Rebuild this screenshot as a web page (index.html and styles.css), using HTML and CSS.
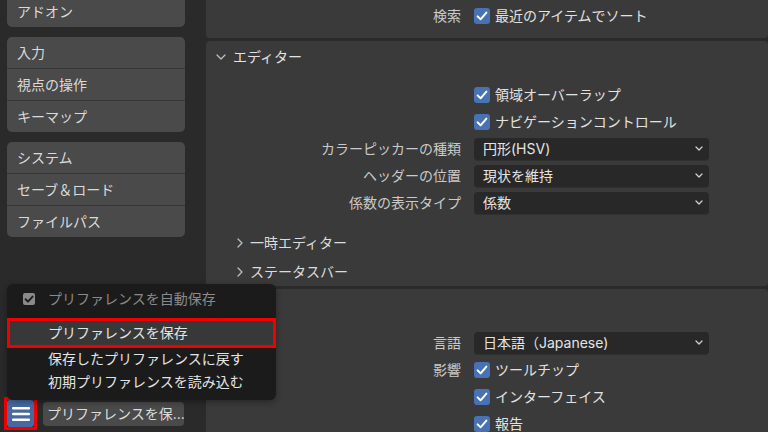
FILE: index.html
```html
<!DOCTYPE html>
<html lang="ja">
<head>
<meta charset="utf-8">
<link rel="stylesheet" href="styles.css">
</head>
<body>
<div class="app">
  <aside class="nav">
    <div class="group first"><div class="item">アドオン</div></div>
    <div class="group">
      <div class="item">入力</div>
      <div class="item">視点の操作</div>
      <div class="item">キーマップ</div>
    </div>
    <div class="group">
      <div class="item">システム</div>
      <div class="item">セーブ＆ロード</div>
      <div class="item">ファイルパス</div>
    </div>
    <div class="footer">
      <div class="burger-frame">
        <div class="burger">
          <svg width="18" height="16" viewBox="0 0 18 16"><rect x="0" y="1" width="18" height="2.6" rx="1" fill="#fff"/><rect x="0" y="6.7" width="18" height="2.6" rx="1" fill="#fff"/><rect x="0" y="12.4" width="18" height="2.6" rx="1" fill="#fff"/></svg>
        </div>
      </div>
      <div class="save-btn">プリファレンスを保...</div>
    </div>
    <div class="popup">
      <div class="prow disabled">
        <span class="gcheck"><svg width="12" height="12" viewBox="0 0 12 12"><path d="M2.6 6.2 L5 8.6 L9.6 3.6" fill="none" stroke="#1e1e1e" stroke-width="2" stroke-linecap="round" stroke-linejoin="round"/></svg></span>
        <span>プリファレンスを自動保存</span>
      </div>
      <div class="prow hl"><span>プリファレンスを保存</span></div>
      <div class="prow r3"><span>保存したプリファレンスに戻す</span></div>
      <div class="prow r4"><span>初期プリファレンスを読み込む</span></div>
    </div>
  </aside>
  <main class="main">
    <section class="panel top">
      <div class="row">
        <div class="label">検索</div>
        <div class="check"><span class="box"><svg width="16" height="16" viewBox="0 0 16 16"><path d="M3.6 8.4 L6.6 11.3 L12.4 4.6" fill="none" stroke="#fff" stroke-width="2" stroke-linecap="round" stroke-linejoin="round"/></svg></span><span>最近のアイテムでソート</span></div>
      </div>
    </section>
    <section class="panel editor">
      <div class="header"><svg width="10" height="6" viewBox="0 0 10 6"><path d="M1 1 L5 5 L9 1" fill="none" stroke="#bdbdbd" stroke-width="1.3" stroke-linecap="round" stroke-linejoin="round"/></svg><span>エディター</span></div>
      <div class="rows">
        <div class="row">
          <div class="label"></div>
          <div class="check"><span class="box"><svg width="16" height="16" viewBox="0 0 16 16"><path d="M3.6 8.4 L6.6 11.3 L12.4 4.6" fill="none" stroke="#fff" stroke-width="2" stroke-linecap="round" stroke-linejoin="round"/></svg></span><span>領域オーバーラップ</span></div>
        </div>
        <div class="row">
          <div class="label"></div>
          <div class="check"><span class="box"><svg width="16" height="16" viewBox="0 0 16 16"><path d="M3.6 8.4 L6.6 11.3 L12.4 4.6" fill="none" stroke="#fff" stroke-width="2" stroke-linecap="round" stroke-linejoin="round"/></svg></span><span>ナビゲーションコントロール</span></div>
        </div>
        <div class="row">
          <div class="label">カラーピッカーの種類</div>
          <div class="dropdown"><span>円形(HSV)</span><svg width="8" height="5" viewBox="0 0 8 5"><path d="M1 1 L4 4 L7 1" fill="none" stroke="#d0d0d0" stroke-width="1.3" stroke-linecap="round" stroke-linejoin="round"/></svg></div>
        </div>
        <div class="row">
          <div class="label">ヘッダーの位置</div>
          <div class="dropdown"><span>現状を維持</span><svg width="8" height="5" viewBox="0 0 8 5"><path d="M1 1 L4 4 L7 1" fill="none" stroke="#d0d0d0" stroke-width="1.3" stroke-linecap="round" stroke-linejoin="round"/></svg></div>
        </div>
        <div class="row">
          <div class="label">係数の表示タイプ</div>
          <div class="dropdown"><span>係数</span><svg width="8" height="5" viewBox="0 0 8 5"><path d="M1 1 L4 4 L7 1" fill="none" stroke="#d0d0d0" stroke-width="1.3" stroke-linecap="round" stroke-linejoin="round"/></svg></div>
        </div>
      </div>
      <div class="subs">
        <div class="sub"><svg width="6" height="10" viewBox="0 0 6 10"><path d="M1 1 L5 5 L1 9" fill="none" stroke="#bdbdbd" stroke-width="1.3" stroke-linecap="round" stroke-linejoin="round"/></svg><span>一時エディター</span></div>
        <div class="sub"><svg width="6" height="10" viewBox="0 0 6 10"><path d="M1 1 L5 5 L1 9" fill="none" stroke="#bdbdbd" stroke-width="1.3" stroke-linecap="round" stroke-linejoin="round"/></svg><span>ステータスバー</span></div>
      </div>
    </section>
    <section class="panel lang">
      <div class="header"><svg width="10" height="6" viewBox="0 0 10 6"><path d="M1 1 L5 5 L9 1" fill="none" stroke="#bdbdbd" stroke-width="1.3" stroke-linecap="round" stroke-linejoin="round"/></svg><span>翻訳</span></div>
      <div class="rows">
        <div class="row">
          <div class="label">言語</div>
          <div class="dropdown"><span>日本語（Japanese)</span><svg width="8" height="5" viewBox="0 0 8 5"><path d="M1 1 L4 4 L7 1" fill="none" stroke="#d0d0d0" stroke-width="1.3" stroke-linecap="round" stroke-linejoin="round"/></svg></div>
        </div>
        <div class="row">
          <div class="label">影響</div>
          <div class="check"><span class="box"><svg width="16" height="16" viewBox="0 0 16 16"><path d="M3.6 8.4 L6.6 11.3 L12.4 4.6" fill="none" stroke="#fff" stroke-width="2" stroke-linecap="round" stroke-linejoin="round"/></svg></span><span>ツールチップ</span></div>
        </div>
        <div class="row">
          <div class="label"></div>
          <div class="check"><span class="box"><svg width="16" height="16" viewBox="0 0 16 16"><path d="M3.6 8.4 L6.6 11.3 L12.4 4.6" fill="none" stroke="#fff" stroke-width="2" stroke-linecap="round" stroke-linejoin="round"/></svg></span><span>インターフェイス</span></div>
        </div>
        <div class="row">
          <div class="label"></div>
          <div class="check"><span class="box"><svg width="16" height="16" viewBox="0 0 16 16"><path d="M3.6 8.4 L6.6 11.3 L12.4 4.6" fill="none" stroke="#fff" stroke-width="2" stroke-linecap="round" stroke-linejoin="round"/></svg></span><span>報告</span></div>
        </div>
      </div>
    </section>
  </main>
</div>
</body>
</html>
```
FILE: styles.css
```css
* { box-sizing: border-box; margin: 0; padding: 0; }
html, body { width: 768px; height: 432px; overflow: hidden; }
body {
  background: #2a2a2a;
  font-family: Inter, "Noto Sans CJK JP", sans-serif;
  font-size: 14px;
  line-height: 1;
  color: #dcdcdc;
}
.app { display: flex; height: 432px; }

/* navigation */
.nav {
  position: relative;
  width: 206px;
  flex: none;
  padding: 0 21px 0 7px;
  display: flex;
  flex-direction: column;
  gap: 10px;
  background: #2a2a2a;
}
.group {
  flex: none;
  background: #4a4a4a;
  border-radius: 5px;
  overflow: hidden;
}
.group.first { margin-top: -4px; }
.item {
  height: 31px;
  padding-left: 10px;
  display: flex;
  align-items: center;
  color: #dadada;
}
.item + .item { height: 32px; border-top: 1px solid #363636; }

.footer {
  flex: none;
  margin-top: auto;
  margin-left: -3px;
  margin-bottom: 2px;
  display: flex;
  align-items: center;
  gap: 6px;
}
.burger-frame {
  width: 33px;
  height: 33px;
  border: 3px solid #f20000;
  background: #1e1e1e;
}
.burger {
  width: 27px;
  height: 27px;
  background: #4669a3;
  border-radius: 3px;
  display: flex;
  align-items: center;
  justify-content: center;
}
.save-btn {
  width: 141px;
  height: 24px;
  background: #4a4a4a;
  border-radius: 4px;
  padding-left: 4px;
  display: flex;
  align-items: center;
  color: #dcdcdc;
  white-space: nowrap;
  overflow: hidden;
}

/* popup menu */
.popup {
  position: absolute;
  left: 7px;
  top: 284px;
  width: 269px;
  height: 116px;
  background: #1b1b1b;
  border-radius: 6px;
  z-index: 10;
  padding-top: 3px;
  box-shadow: 0 2px 6px rgba(0,0,0,0.35);
}
.prow {
  display: flex;
  align-items: center;
  padding-left: 41px;
  color: #e4e4e4;
  white-space: nowrap;
}
.prow.disabled {
  height: 24px;
  padding-left: 16px;
  gap: 13px;
  color: #8a8a8a;
  margin-bottom: 7px;
}
.gcheck {
  width: 12px;
  height: 12px;
  border-radius: 2px;
  background: #8a8a8a;
  display: flex;
}
.prow.hl {
  height: 30px;
  background: #383838;
  box-shadow: inset 0 0 0 3px #f20000;
}
.prow.r3 { height: 20px; padding-top: 1px; }
.prow.r4 { height: 28px; }

/* main area */
.main {
  flex: 1;
  display: flex;
  flex-direction: column;
  gap: 3px;
  min-width: 0;
  height: 432px;
  overflow: hidden;
}
.panel { flex: none; background: #3a3a3a; border-radius: 4px; }
.panel.top {
  height: 38px;
  padding-top: 5px;
  border-radius: 0 0 4px 4px;
}
.panel.top .row { height: 22px; }
.panel.lang { border-radius: 4px 4px 0 0; }

.header {
  height: 32px;
  padding-left: 10px;
  display: flex;
  align-items: center;
  gap: 7px;
  color: #e2e2e2;
}
.rows { padding-top: 8px; }
.row {
  display: grid;
  grid-template-columns: 255px 235px;
  column-gap: 13px;
  height: 27px;
  align-items: center;
}
.label {
  text-align: right;
  color: #cacaca;
  white-space: nowrap;
}
.check {
  display: flex;
  align-items: center;
  gap: 5px;
  color: #e2e2e2;
  white-space: nowrap;
}
.box {
  width: 16px;
  height: 16px;
  border-radius: 3px;
  background: #4772b3;
  display: flex;
}
.dropdown {
  height: 22px;
  background: #282828;
  border-radius: 4px;
  display: flex;
  align-items: center;
  justify-content: space-between;
  padding: 0 6px 0 9px;
  color: #e4e4e4;
  box-shadow: 0 1px 0 #303030;
}
.subs { margin-top: 12px; }
.sub {
  height: 29px;
  padding-left: 31px;
  display: flex;
  align-items: center;
  gap: 7px;
  color: #dcdcdc;
}
```
